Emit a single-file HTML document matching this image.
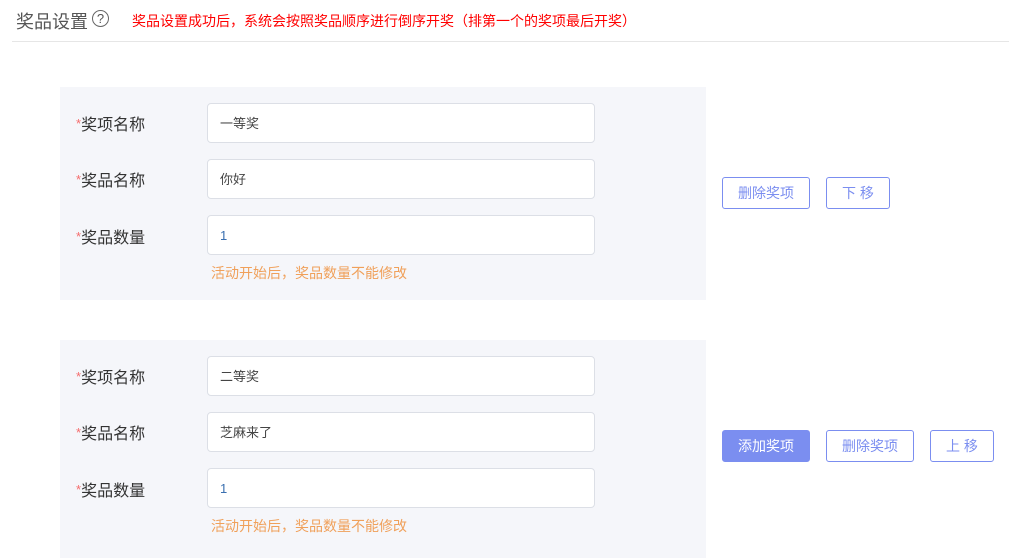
<!DOCTYPE html>
<html><head><meta charset="utf-8"><style>
body{margin:0;width:1009px;height:558px;background:#fff;font-family:"Liberation Sans","Noto Sans CJK SC",sans-serif;position:relative;overflow:hidden}
.a{position:absolute}
.title{left:16px;top:8px;font-size:18px;color:#555}
.q{left:92px;top:10px;width:15px;height:15px;border:1.5px solid #666;border-radius:50%;font-size:13px;line-height:15px;text-align:center;color:#555}
.tip{left:132px;top:11px;font-size:14px;color:#f00}
.line{left:12px;top:41px;width:997px;height:1px;background:#e6e6e6}
.panel{left:60px;width:646px;background:#f5f6fa}
.lab{left:76px;font-size:16px;color:#333}
.lab b{color:#f56c6c;font-weight:normal;font-size:13px;position:relative;top:-2px}
.inp{left:207px;border:1px solid #dcdfe6;border-radius:4px;background:#fff;font-size:13px;color:#444;padding-left:12px;box-sizing:border-box;width:388px;height:40px;line-height:40px}
.num{color:#3a6fb0}
.hint{left:211px;font-size:14px;color:#f0a05a}
.btn{height:32px;border:1px solid #7b8ef0;border-radius:3px;box-sizing:border-box;font-size:14px;color:#7b8ef0;text-align:center;line-height:30px;background:#fff}
.pri{background:#7b8ef0;color:#fff}
</style></head><body>
<div class="a title">奖品设置</div><div class="a q">?</div>
<div class="a tip">奖品设置成功后，系统会按照奖品顺序进行倒序开奖（排第一个的奖项最后开奖）</div>
<div class="a line"></div>

<div class="a panel" style="top:87px;height:213px"></div>
<div class="a lab" style="top:111px"><b>*</b>奖项名称</div>
<div class="a inp" style="top:103px">一等奖</div>
<div class="a lab" style="top:167px"><b>*</b>奖品名称</div>
<div class="a inp" style="top:159px">你好</div>
<div class="a lab" style="top:224px"><b>*</b>奖品数量</div>
<div class="a inp num" style="top:215px">1</div>
<div class="a hint" style="top:263px">活动开始后，奖品数量不能修改</div>
<div class="a btn" style="left:722px;top:177px;width:88px">删除奖项</div>
<div class="a btn" style="left:826px;top:177px;width:64px">下 移</div>

<div class="a panel" style="top:340px;height:218px"></div>
<div class="a lab" style="top:364px"><b>*</b>奖项名称</div>
<div class="a inp" style="top:356px">二等奖</div>
<div class="a lab" style="top:420px"><b>*</b>奖品名称</div>
<div class="a inp" style="top:412px">芝麻来了</div>
<div class="a lab" style="top:477px"><b>*</b>奖品数量</div>
<div class="a inp num" style="top:468px">1</div>
<div class="a hint" style="top:516px">活动开始后，奖品数量不能修改</div>
<div class="a btn pri" style="left:722px;top:430px;width:88px">添加奖项</div>
<div class="a btn" style="left:826px;top:430px;width:88px">删除奖项</div>
<div class="a btn" style="left:930px;top:430px;width:64px">上 移</div>
</body></html>
